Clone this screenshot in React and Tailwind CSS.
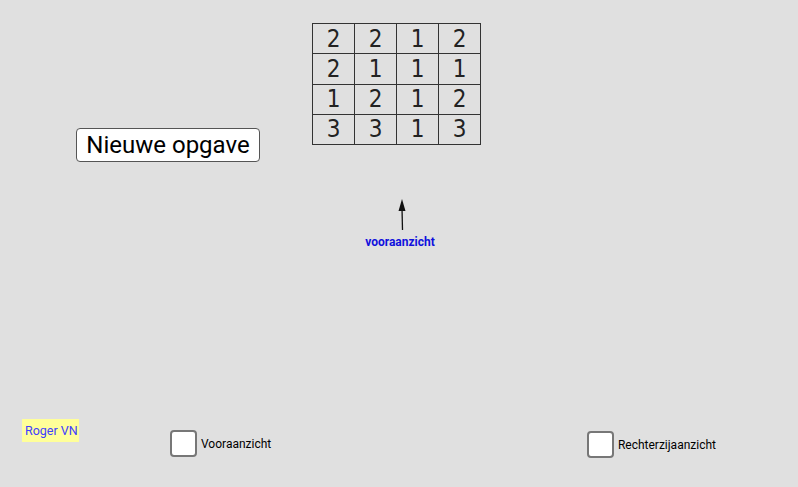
const grid = [
  [2, 2, 1, 2],
  [2, 1, 1, 1],
  [1, 2, 1, 2],
  [3, 3, 1, 3],
]

function Checkbox({ label }) {
  return (
    <label className="flex items-center gap-[4px]">
      <span className="w-[27px] h-[27px] bg-white border-2 border-[#777] rounded-[4px]" />
      <span className="text-[12px] text-black">{label}</span>
    </label>
  )
}

export default function App() {
  return (
    <div className="flex flex-col w-[798px] h-[487px] bg-[#e0e0e0] overflow-hidden" style={{ fontFamily: 'Roboto, "Liberation Sans", sans-serif' }}>
      {/* button + number grid */}
      <div className="flex items-start pl-[76px] pt-[23px] gap-[52px]">
        <button className="mt-[105px] w-[184px] h-[34px] bg-white border border-[#555] rounded-[4px] text-[24px] text-black leading-none">
          Nieuwe opgave
        </button>
        <div className="grid grid-cols-[repeat(4,42px)] grid-rows-[repeat(4,30.25px)] border-l-[1.5px] border-t-[1.5px] border-[#333]">
          {grid.flat().map((n, i) => (
            <div key={i}
              className="flex items-center justify-center border-r-[1.5px] border-b-[1.5px] border-[#333] text-[24px] leading-none text-[#222]"
              style={{ fontFamily: '"DejaVu Sans", sans-serif' }}>
              <span className="inline-block scale-x-90">{n}</span>
            </div>
          ))}
        </div>
      </div>

      {/* arrow with label */}
      <div className="flex flex-col items-center w-[800px] mt-[34px]">
        <svg width="18" height="36" viewBox="0 0 18 36" className="ml-[3px]">
          <line x1="9" y1="12" x2="9.5" y2="34" stroke="#111" strokeWidth="1.3" />
          <polygon points="9,3 5.5,15 12.5,15" fill="#111" />
        </svg>
        <span className="mt-[1px] text-[12px] font-bold text-[#1010dd]">vooraanzicht</span>
      </div>

      {/* footer */}
      <div className="flex items-start mt-auto mb-[29px] pl-[22px] pr-[82px]">
        <div className="w-[57px] h-[23px] bg-[#ffff99] text-[12.5px] text-[#4040ff] px-[3px] pt-[3px] whitespace-nowrap">
          Roger VN
        </div>
        <div className="ml-[91px] mt-[11px]">
          <Checkbox label="Vooraanzicht" />
        </div>
        <div className="ml-auto mt-[12px]">
          <Checkbox label="Rechterzijaanzicht" />
        </div>
      </div>
    </div>
  )
}
